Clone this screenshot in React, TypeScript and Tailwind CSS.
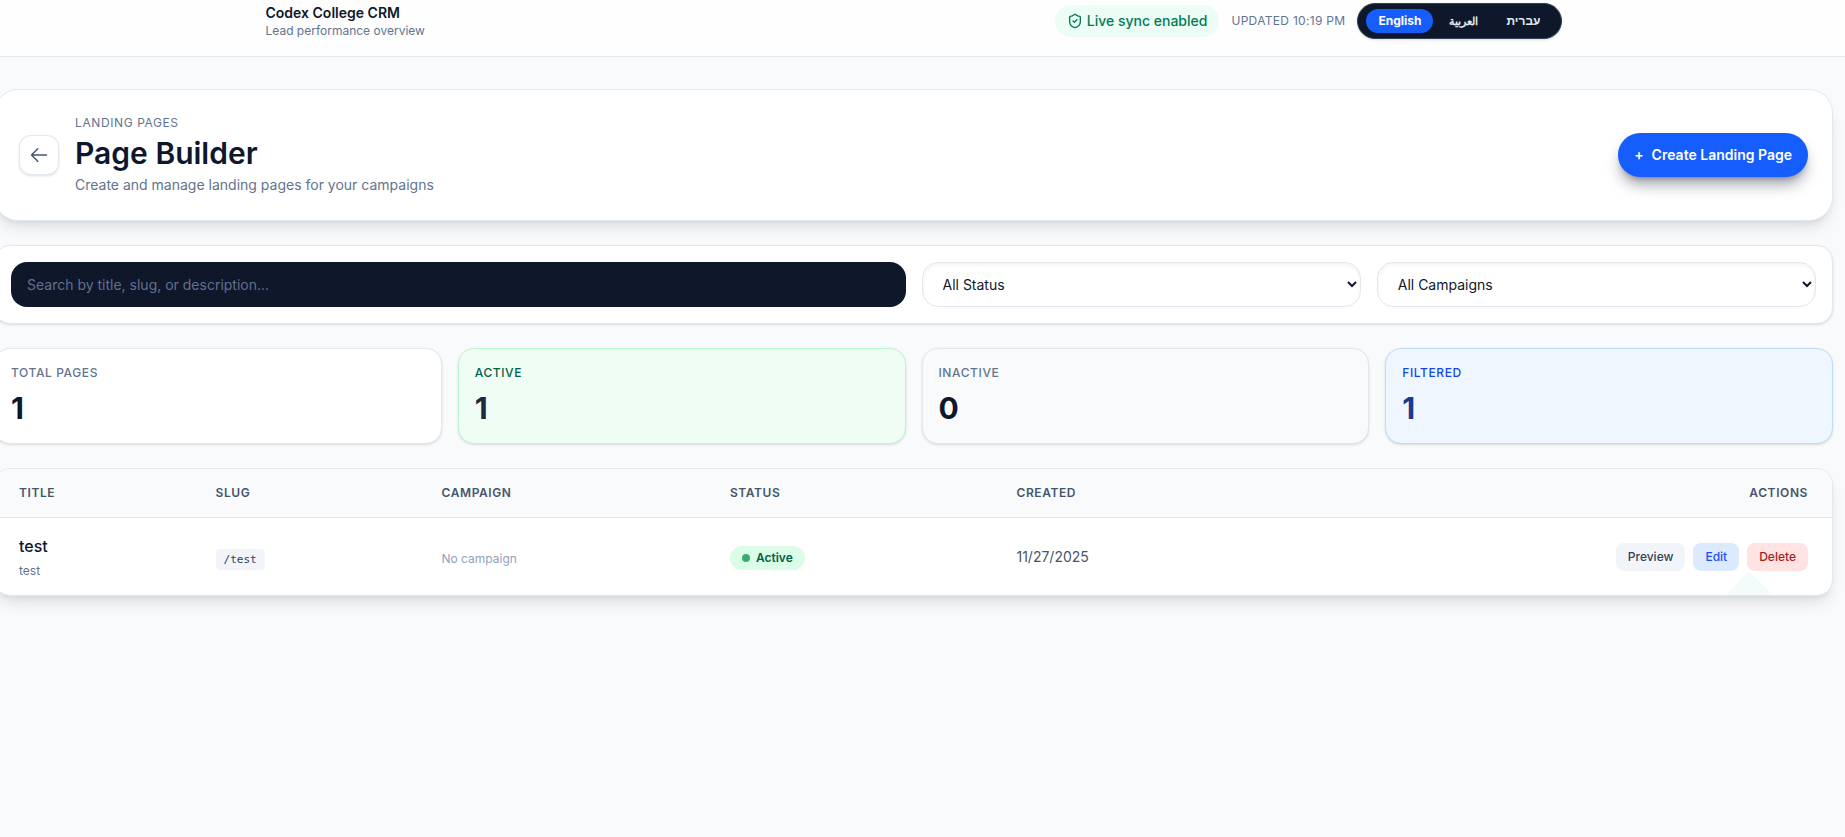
import React, { useState } from "react";
import { ShieldCheck } from "lucide-react";

const languages = [
  { code: "en", label: "English", font: "text-xs font-bold" },
  { code: "ar", label: "العربية", font: "text-[11px] leading-4 font-bold" },
  {
    code: "he",
    label: "עברית",
    font: "text-xs font-bold font-['Liberation_Sans',sans-serif]",
  },
];

const pages = [
  {
    id: 1,
    title: "test",
    description: "test",
    slug: "/test",
    campaign: "",
    active: true,
    created: "11/27/2025",
  },
];

const stats = [
  {
    label: "Total Pages",
    value: 1,
    card: "border-slate-200 bg-white",
    labelColor: "text-slate-500",
    valueColor: "text-slate-900",
  },
  {
    label: "Active",
    value: 1,
    card: "border-green-200 bg-green-50",
    labelColor: "text-emerald-800",
    valueColor: "text-slate-800",
  },
  {
    label: "Inactive",
    value: 0,
    card: "border-slate-200 bg-slate-50",
    labelColor: "text-slate-500",
    valueColor: "text-slate-900",
  },
  {
    label: "Filtered",
    value: 1,
    card: "border-blue-200 bg-blue-50",
    labelColor: "text-blue-700",
    valueColor: "text-blue-900",
  },
];

function TopBar() {
  const [lang, setLang] = useState("en");
  return (
    <header className="border-b border-slate-200 bg-[#fefefe] pt-[3px] pb-[17px] pr-[18px]">
      <div className="max-w-[1296px] mx-auto flex items-center justify-between">
        <div>
          <p className="text-sm font-semibold text-slate-900">
            Codex College CRM
          </p>
          <p className="text-xs text-slate-500">Lead performance overview</p>
        </div>
        <div className="flex items-center gap-3">
          <span className="flex items-center gap-1 rounded-full bg-emerald-50 px-3 py-1.5 text-sm font-medium text-emerald-700">
            <ShieldCheck size={16} />
            Live sync enabled
          </span>
          <span className="text-xs uppercase tracking-wide text-slate-500">
            Updated 10:19 PM
          </span>
          <div className="flex items-center gap-1 rounded-full border border-slate-700 bg-slate-900 px-2 py-[5px] shadow-sm">
            {languages.map((l) => (
              <button
                key={l.code}
                onClick={() => setLang(l.code)}
                className={`rounded-full px-3 py-1 ${l.font} ${
                  lang === l.code ? "bg-[#155dfc] text-white" : "text-slate-200"
                }`}
              >
                {l.label}
              </button>
            ))}
          </div>
        </div>
      </div>
    </header>
  );
}

function PageHeader() {
  return (
    <section className="flex items-center justify-between rounded-3xl border border-slate-200 bg-white px-6 py-[25px] shadow-lg">
      <div className="flex items-center gap-4">
        <button
          aria-label="Back"
          className="flex size-10 items-center justify-center rounded-xl border border-slate-200 bg-white text-slate-600 shadow-sm"
        >
          <svg
            width="20"
            height="20"
            viewBox="0 0 24 24"
            fill="none"
            stroke="currentColor"
            strokeWidth="1.8"
            strokeLinecap="round"
            strokeLinejoin="round"
          >
            <path d="M10.5 19.5 3 12l7.5-7.5M3 12h18" />
          </svg>
        </button>
        <div>
          <p className="text-xs uppercase tracking-wider text-slate-500">
            Landing Pages
          </p>
          <h1 className="mt-1 text-3xl font-semibold text-slate-900">
            Page Builder
          </h1>
          <p className="mt-1 text-sm text-slate-500">
            Create and manage landing pages for your campaigns
          </p>
        </div>
      </div>
      <button className="flex items-center gap-2 rounded-full bg-[#155dfc] px-4 py-3 text-sm font-semibold text-white shadow-lg shadow-slate-900/40">
        <span>+</span>
        Create Landing Page
      </button>
    </section>
  );
}

function Filters() {
  return (
    <section className="grid grid-cols-4 gap-4 rounded-2xl border border-slate-200 bg-white p-4 shadow-sm">
      <input
        type="text"
        aria-label="Search pages"
        placeholder="Search by title, slug, or description..."
        className="col-span-2 h-[45px] rounded-2xl bg-slate-900 px-4 text-sm text-white placeholder:text-[#62708f]"
      />
      <select
        aria-label="Status"
        className="h-[45px] rounded-2xl border border-slate-200 bg-white px-4 text-sm text-slate-900 inset-shadow-sm"
      >
        <option>All Status</option>
        <option>Active</option>
        <option>Inactive</option>
      </select>
      <select
        aria-label="Campaign"
        className="h-[45px] rounded-2xl border border-slate-200 bg-white px-4 text-sm text-slate-900 inset-shadow-sm"
      >
        <option>All Campaigns</option>
      </select>
    </section>
  );
}

function Stats() {
  return (
    <section className="grid grid-cols-4 gap-4">
      {stats.map((s) => (
        <div
          key={s.label}
          className={`rounded-2xl border p-4 shadow-sm ${s.card}`}
        >
          <p
            className={`text-xs font-medium uppercase tracking-wider ${s.labelColor}`}
          >
            {s.label}
          </p>
          <p
            className={`mt-2 text-3xl leading-[38px] font-bold ${s.valueColor}`}
          >
            {s.value}
          </p>
        </div>
      ))}
    </section>
  );
}

function PagesTable() {
  return (
    <section className="relative overflow-hidden rounded-2xl border border-slate-200 bg-white shadow-lg">
      <table className="w-full table-fixed text-left">
        <thead className="border-b border-slate-200 bg-slate-50">
          <tr className="text-xs uppercase tracking-wider text-slate-600">
            <th className="w-[10.7%] px-6 py-4 font-semibold">Title</th>
            <th className="w-[12.3%] px-6 py-4 font-semibold">Slug</th>
            <th className="w-[15.7%] px-6 py-4 font-semibold">Campaign</th>
            <th className="w-[15.6%] px-6 py-4 font-semibold">Status</th>
            <th className="px-6 py-4 font-semibold">Created</th>
            <th className="px-6 py-4 text-right font-semibold">Actions</th>
          </tr>
        </thead>
        <tbody>
          {pages.map((page) => (
            <tr key={page.id}>
              <td className="px-6 py-4">
                <p className="font-medium text-slate-900">{page.title}</p>
                <p className="mt-[5px] text-xs text-slate-500">
                  {page.description}
                </p>
              </td>
              <td className="px-6 py-4">
                <code className="rounded bg-slate-100 px-2 py-1 font-['DejaVu_Sans_Mono',monospace] text-[11px] text-slate-700">
                  {page.slug}
                </code>
              </td>
              <td className="px-6 py-4">
                <span className="text-xs text-slate-400">
                  {page.campaign || "No campaign"}
                </span>
              </td>
              <td className="px-6 py-4">
                <span className="inline-flex items-center gap-1.5 rounded-full bg-green-100 px-3 py-1 text-xs font-semibold text-emerald-800">
                  <span className="size-2 rounded-full bg-[#3aab78]" />
                  {page.active ? "Active" : "Inactive"}
                </span>
              </td>
              <td className="px-6 py-4 text-sm text-slate-600">
                {page.created}
              </td>
              <td className="px-6 py-4">
                <div className="flex justify-end gap-2">
                  <button className="rounded-lg bg-slate-100 px-3 py-1.5 text-xs font-medium text-slate-700">
                    Preview
                  </button>
                  <button className="rounded-lg bg-blue-100 px-3 py-1.5 text-xs font-medium text-[#1d4ff0]">
                    Edit
                  </button>
                  <button className="rounded-lg bg-red-100 px-3 py-1.5 text-xs font-medium text-[#a3221c]">
                    Delete
                  </button>
                </div>
              </td>
            </tr>
          ))}
        </tbody>
      </table>
      <svg
        className="absolute right-15 bottom-0"
        width="46"
        height="22"
        viewBox="0 0 46 22"
        aria-hidden="true"
      >
        <path d="M0 22 L20 1 Q23 -1 26 1 L46 22 Z" fill="#f3fcfa" />
      </svg>
    </section>
  );
}

export default function App() {
  return (
    <div className="min-h-screen overflow-x-hidden bg-slate-50 font-['Inter',sans-serif]">
      <TopBar />
      <main className="-ml-1.5 mr-3 flex flex-col gap-6 py-8">
        <PageHeader />
        <Filters />
        <Stats />
        <PagesTable />
      </main>
    </div>
  );
}
